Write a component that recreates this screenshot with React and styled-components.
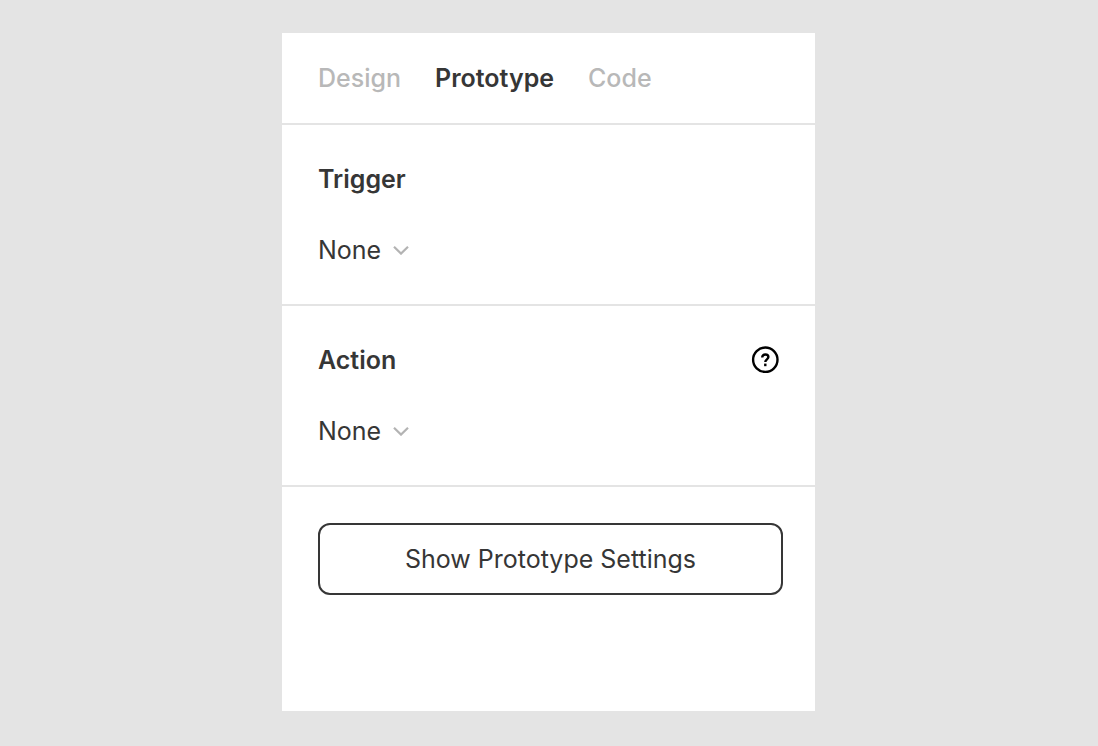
import styled, { createGlobalStyle } from "styled-components";

const GlobalStyle = createGlobalStyle`
    * {
        box-sizing: border-box;
    }

    body {
        margin: 0;
        background: #e4e4e4;
        color: #363636;
        font-family: Inter, "Liberation Sans", sans-serif;
        font-variant-ligatures: none;
    }
`;

const tabs = ["Design", "Prototype", "Code"];

const NoneSelect = ({ id }) => (
    <SelectRow>
        <Select id={id} defaultValue="None">
            <option>None</option>
        </Select>
        <Chevron viewBox="0 0 16 10" aria-hidden="true">
            <path d="M1 1.8 8 8.6l7-6.8" />
        </Chevron>
    </SelectRow>
);

const App = () => {
    return (
        <>
            <GlobalStyle />
            <Page>
                <Panel>
                    <Tabs>
                        {tabs.map((tab) => (
                            <Tab key={tab} type="button" $active={tab === "Prototype"}>
                                {tab}
                            </Tab>
                        ))}
                    </Tabs>
                    <Section>
                        <SectionHeader>
                            <Title htmlFor="trigger">Trigger</Title>
                        </SectionHeader>
                        <NoneSelect id="trigger" />
                    </Section>
                    <Section>
                        <SectionHeader>
                            <Title htmlFor="action">Action</Title>
                            <HelpButton type="button" aria-label="Help">
                                <HelpIcon viewBox="0 0 28 28" aria-hidden="true">
                                    <circle cx="14.3" cy="13.7" r="12.2" />
                                    <path d="M11.2 11.4c0-1.8 1.2-2.9 3.1-2.9s3.1 1.1 3.1 2.6c0 2.2-3.1 2.3-3.1 4.9" />
                                    <path d="M14.3 17.6v2.6" />
                                </HelpIcon>
                            </HelpButton>
                        </SectionHeader>
                        <NoneSelect id="action" />
                    </Section>
                    <Footer>
                        <SettingsButton type="button">Show Prototype Settings</SettingsButton>
                    </Footer>
                </Panel>
            </Page>
        </>
    );
};

// Styled Components

const Page = styled.main`
    display: flex;
    justify-content: center;
    min-height: 100vh;
    padding: 33px 25px 35px 24px;
`;

const Panel = styled.div`
    width: 100%;
    max-width: 533px;
    background: #ffffff;
`;

const Tabs = styled.nav`
    display: flex;
    gap: 34px;
    padding: 29px 36px;
    border-bottom: 2px solid #e4e4e4;
`;

const Tab = styled.button`
    padding: 0;
    border: none;
    background: none;
    color: ${({ $active }) => ($active ? "#363636" : "#b8b8b8")};
    font-family: inherit;
    font-size: 25px;
    font-weight: ${({ $active }) => ($active ? 600 : 500)};
    line-height: 32px;
    cursor: pointer;
`;

const Section = styled.section`
    padding: 38px 36px;
    border-bottom: 2px solid #e4e4e4;
`;

const SectionHeader = styled.div`
    display: flex;
    align-items: center;
    justify-content: space-between;
    margin-bottom: 39px;
`;

const Title = styled.label`
    font-size: 25px;
    font-weight: 600;
    line-height: 32px;
`;

const SelectRow = styled.div`
    display: flex;
    align-items: center;
    gap: 11px;
`;

const Select = styled.select`
    appearance: none;
    padding: 0;
    border: none;
    background: none;
    color: inherit;
    font-family: inherit;
    font-size: 25px;
    line-height: 32px;
`;

const Chevron = styled.svg`
    width: 16px;
    height: 10px;
    fill: none;
    stroke: #b3b3b3;
    stroke-width: 2.2;
    pointer-events: none;
`;

const HelpButton = styled.button`
    display: flex;
    padding: 0;
    border: none;
    background: none;
    cursor: pointer;
`;

const HelpIcon = styled.svg`
    width: 28px;
    height: 28px;
    fill: none;
    stroke: #000000;
    stroke-width: 2.4;
`;

const Footer = styled.div`
    padding: 36px 32px 36px 36px;
`;

const SettingsButton = styled.button`
    width: 100%;
    height: 72px;
    border: 2px solid #363636;
    border-radius: 12px;
    background: #ffffff;
    color: inherit;
    font-family: inherit;
    font-size: 25px;
    font-variant-ligatures: none;
    cursor: pointer;
`;

export default App;
